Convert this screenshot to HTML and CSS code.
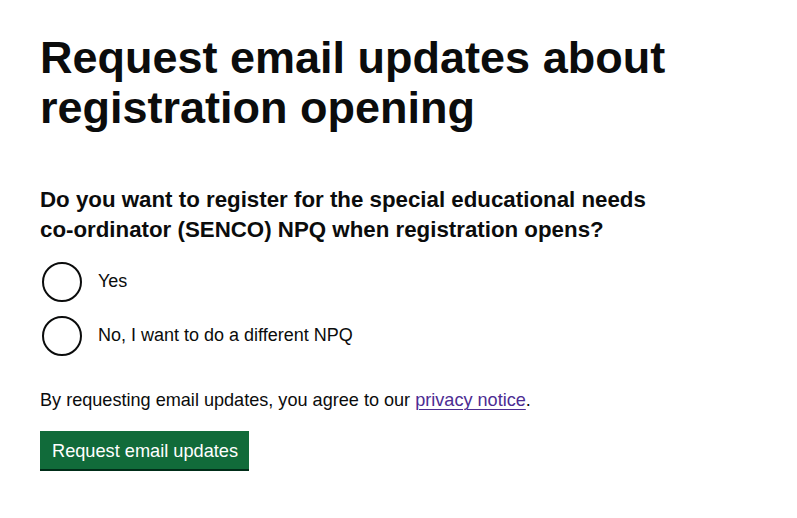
FILE: index.html
```html
<!DOCTYPE html>
<html lang="en">
<head>
<meta charset="utf-8">
<title>Request email updates about registration opening</title>
<link rel="stylesheet" href="styles.css">
</head>
<body>
<main class="page">
  <h1 class="heading">Request email updates about registration opening</h1>
  <form class="form">
    <fieldset class="fieldset">
      <legend class="question">Do you want to register for the special educational needs co-ordinator (SENCO) NPQ when registration opens?</legend>
      <div class="radios">
        <div class="radio-item">
          <input class="radio-input" type="radio" id="opt-yes" name="senco">
          <label class="radio-label" for="opt-yes">Yes</label>
        </div>
        <div class="radio-item">
          <input class="radio-input" type="radio" id="opt-no" name="senco">
          <label class="radio-label" for="opt-no">No, I want to do a different NPQ</label>
        </div>
      </div>
    </fieldset>
    <p class="body-text">By requesting email updates, you agree to our <a class="link" href="#">privacy notice</a>.</p>
    <button class="button" type="button">Request email updates</button>
  </form>
</main>
</body>
</html>
```
FILE: styles.css
```css
html, body {
  margin: 0;
  padding: 0;
  background: #ffffff;
}

body {
  font-family: "Liberation Sans", Arial, sans-serif;
  color: #0b0c0c;
}

.page {
  padding: 33px 40px 40px 40px;
  max-width: 680px;
}

.heading {
  margin: 0 0 51px 0;
  font-size: 45px;
  line-height: 50px;
  font-weight: 700;
  color: #0b0c0c;
}

.form {
  margin: 0;
  max-width: 640px;
}

.fieldset {
  margin: 0;
  padding: 0;
  border: 0;
  min-width: 0;
}

.question {
  padding: 1px 0 0 0;
  margin: 0 0 15px 0;
  font-size: 22.3px;
  line-height: 30px;
  font-weight: 700;
  color: #0b0c0c;
}

.radios {
  display: flex;
  flex-direction: column;
  gap: 10px;
}

.radio-item {
  display: flex;
  align-items: flex-start;
  min-height: 44px;
}

.radio-input {
  appearance: none;
  -webkit-appearance: none;
  box-sizing: border-box;
  width: 40px;
  height: 40px;
  margin: 2px 0 0 2px;
  border: 2px solid #0b0c0c;
  border-radius: 50%;
  background: #ffffff;
  flex: none;
}

.radio-label {
  padding: 9px 15px 4px 16px;
  font-size: 18px;
  line-height: 25px;
  color: #0b0c0c;
}

.body-text {
  margin: 30px 0 18px 0;
  font-size: 18.1px;
  line-height: 25px;
  color: #0b0c0c;
}

.link {
  color: #4c2c92;
  text-decoration: underline;
  text-decoration-thickness: 1px;
  text-underline-offset: 3px;
}

.button {
  display: inline-block;
  margin: 0;
  padding: 9px 11px 6px 12px;
  border: 0;
  border-radius: 0;
  background: #116b3a;
  box-shadow: 0 2px 0 #002d18;
  color: #ffffff;
  font-family: "Liberation Sans", Arial, sans-serif;
  font-size: 18.2px;
  line-height: 23px;
  cursor: pointer;
}
```
